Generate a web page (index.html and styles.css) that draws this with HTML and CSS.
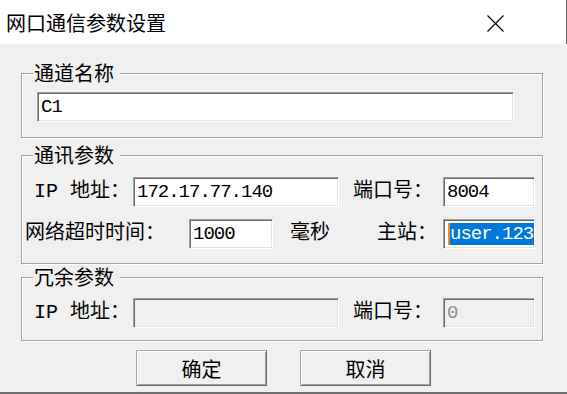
FILE: index.html
```html
<!DOCTYPE html>
<html lang="zh-CN">
<head>
  <meta charset="UTF-8" />
  <title>网口通信参数设置</title>
  <link rel="stylesheet" href="styles.css">
</head>
<body>
  <div class="dialog">
    <div class="titlebar">
      <span class="title">网口通信参数设置</span>
      <button class="close-button">
        <svg xmlns="http://www.w3.org/2000/svg" width="17" height="17" viewBox="0 0 17 17" fill="none" stroke="#000" stroke-width="1.1">
          <line x1="0.5" y1="0.5" x2="16.5" y2="16.5"></line>
          <line x1="16.5" y1="0.5" x2="0.5" y2="16.5"></line>
        </svg>
      </button>
    </div>

    <div class="content">
      <fieldset class="group group-name">
        <legend>通道名称</legend>
        <div class="row">
          <div class="field field-wide">C1</div>
        </div>
      </fieldset>

      <fieldset class="group group-comm">
        <legend>通讯参数</legend>
        <div class="row">
          <span class="label label-ip">IP 地址：</span>
          <div class="field field-ip">172.17.77.140</div>
          <span class="label label-port">端口号：</span>
          <div class="field field-port">8004</div>
        </div>
        <div class="row">
          <span class="label label-timeout">网络超时时间：</span>
          <div class="field field-timeout">1000</div>
          <span class="label label-unit">毫秒</span>
          <span class="label label-master">主站：</span>
          <div class="field field-port"><span class="selected">user.123</span></div>
        </div>
      </fieldset>

      <fieldset class="group group-backup">
        <legend>冗余参数</legend>
        <div class="row">
          <span class="label label-ip">IP 地址：</span>
          <div class="field field-ip disabled"></div>
          <span class="label label-port">端口号：</span>
          <div class="field field-port disabled">0</div>
        </div>
      </fieldset>

      <div class="buttons">
        <button class="push-button">确定</button>
        <button class="push-button">取消</button>
      </div>
    </div>
  </div>
</body>
</html>
```

FILE: styles.css
```css
* {
  margin: 0;
  padding: 0;
  box-sizing: border-box;
}

body {
  font-family: "Noto Sans CJK SC", sans-serif;
  background: #f0f0f0;
  color: #000;
  width: 567px;
  height: 394px;
  overflow: hidden;
}

.dialog {
  width: 567px;
  height: 394px;
  display: flex;
  flex-direction: column;
  border-bottom: 2px solid #6e6e6e;
}

/* Title bar */
.titlebar {
  height: 44px;
  background: #fff;
  display: flex;
  align-items: center;
  justify-content: space-between;
  padding: 0 0 0 6px;
  border-right: 1px solid #6e6e6e;
}

.title {
  font-size: 20px;
  line-height: 24px;
  margin-top: 2px;
}

.close-button {
  width: 46px;
  height: 44px;
  margin-right: 48px;
  padding-top: 2px;
  background: transparent;
  border: none;
  display: flex;
  align-items: center;
  justify-content: center;
}

/* Group boxes */
.content {
  flex: 1;
  padding: 18px 24px 0 21px;
}

.group {
  border: 1px solid #a0a0a0;
  box-shadow: inset 1px 1px #fff, 1px 1px #fff;
  min-width: 0;
}

.group legend {
  font-size: 20px;
  line-height: 22px;
  margin-left: 11px;
  padding: 0 6px 0 1px;
  background: #f0f0f0;
}

.group-name {
  padding: 8px 0 15px;
}

.group-comm {
  margin-top: 6px;
  padding: 11px 0 14px;
}

.group-backup {
  margin-top: 2px;
  padding: 10px 0 12px;
}

.row {
  display: flex;
  align-items: center;
}

.row + .row {
  margin-top: 12px;
}

.label {
  font-family: "Liberation Mono", "Noto Sans CJK SC", monospace;
  font-size: 20px;
  line-height: 24px;
  white-space: nowrap;
}

.label-ip {
  margin-left: 12px;
  width: 99px;
}

.label-port {
  margin-left: 14px;
  width: 90px;
}

.label-timeout {
  margin-left: 3px;
  width: 164px;
}

.label-unit {
  margin-left: 17px;
  width: 87px;
}

.label-master {
  width: 66px;
}

/* Sunken text fields */
.field {
  height: 30px;
  padding: 0 2px 0 3px;
  background: #fff;
  border: 1px solid;
  border-color: #a0a0a0 #fff #fff #a0a0a0;
  box-shadow: inset 1px 1px #696969, inset -1px -1px #e3e3e3;
  font-family: "Liberation Mono", monospace;
  font-size: 19px;
  letter-spacing: -1px;
  line-height: 28px;
  white-space: nowrap;
  overflow: hidden;
}

.field-wide {
  margin-left: 15px;
  width: 477px;
}

.field-ip {
  width: 206px;
}

.field-port {
  width: 92px;
}

.field-timeout {
  width: 84px;
}

.field.disabled {
  background: #f0f0f0;
  color: #8c8c8c;
}

.selected {
  display: inline-block;
  line-height: 22px;
  margin-left: 1px;
  padding: 0 1px 0 0;
  background: #0078d7;
  color: #fff;
  border-left: 2px solid #f08a24;
}

/* Buttons */
.buttons {
  display: flex;
  gap: 33px;
  margin-top: 9px;
  padding-left: 115px;
}

.push-button {
  width: 131px;
  height: 36px;
  font-family: "Noto Sans CJK SC", sans-serif;
  font-size: 20px;
  background: #f0f0f0;
  border: 1px solid;
  border-color: #a9a9a9 #696969 #696969 #a9a9a9;
  box-shadow: inset 1px 1px #fff, inset -1px -1px #a0a0a0;
  color: #000;
}
```
